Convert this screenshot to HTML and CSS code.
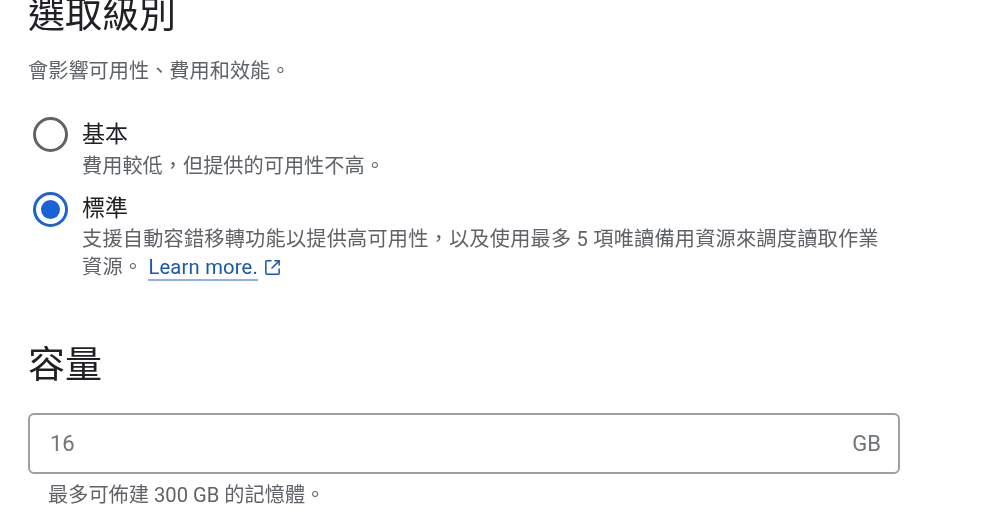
FILE: index.html
```html
<!DOCTYPE html>
<html lang="zh-Hant">
<head>
<meta charset="UTF-8">
<title>選取級別</title>
<link rel="stylesheet" href="styles.css">
</head>
<body>
  <main class="page">
    <h2 class="title">選取級別</h2>
    <p class="subtitle">會影響可用性、費用和效能。</p>

    <div class="option">
      <span class="radio"></span>
      <div class="option-text">
        <div class="option-label">基本</div>
        <div class="option-desc">費用較低&#65292;但提供的可用性不高。</div>
      </div>
    </div>

    <div class="option">
      <span class="radio checked"></span>
      <div class="option-text">
        <div class="option-label">標準</div>
        <div class="option-desc long">支援自動容錯移轉功能以提供高可用性&#65292;以及使用最多 5 項唯讀備用資源來調度讀取作業<br>資源。 <a class="link" href="#">Learn more.</a>
          <svg class="ext-icon" viewBox="0 0 20 20" fill="none" stroke="currentColor" stroke-width="1.6"><path d="M9 3H4a1 1 0 0 0-1 1v12a1 1 0 0 0 1 1h12a1 1 0 0 0 1-1v-5"/><path d="M12 3h5v5"/><path d="M17 3L9 11"/></svg>
        </div>
      </div>
    </div>

    <h2 class="title capacity-title">容量</h2>

    <div class="field">
      <span class="field-value">16</span>
      <span class="field-unit">GB</span>
    </div>
    <p class="hint">最多可佈建 300 GB 的記憶體。</p>
  </main>
</body>
</html>
```

FILE: styles.css
```css
*{box-sizing:border-box;margin:0;padding:0;}
body{
  background:#fff;color:#3c4043;overflow:hidden;
  font-family:Roboto,"Noto Sans CJK TC",sans-serif;
}
.page{width:872px;margin-left:28px;filter:blur(.6px);}
.title{
  font-size:37px;line-height:46px;font-weight:400;color:#202124;
}
.page > .title:first-child{margin-top:-7px;}
.subtitle{font-size:20.2px;line-height:28px;margin-top:18px;color:#5f6368;}
.option{display:flex;gap:14px;margin-left:5px;}
.subtitle + .option{margin-top:30px;}
.option + .option{margin-top:9px;}
.radio{
  flex:none;width:35px;height:35px;margin-top:2px;border-radius:50%;
  border:3px solid #5f6368;background:#fff;
}
.radio.checked{
  margin-top:3px;border-color:#1a62d6;position:relative;
}
.radio.checked::after{
  content:"";position:absolute;left:5px;top:5px;width:19px;height:19px;
  border-radius:50%;background:#1a62d6;
}
.option-text{flex:1;padding-top:3px;}
.option-label{font-size:23px;line-height:34px;color:#202124;}
.option-desc{font-size:20.2px;line-height:28px;color:#5f6368;}
.option-desc.long{margin-top:-1px;letter-spacing:.2px;}
.link{
  color:#1a56b0;text-decoration:none;
  border-bottom:2px solid #8fb2e6;
}
.ext-icon{width:19px;height:19px;color:#1a56b0;vertical-align:-3px;}
.capacity-title{margin-top:62px;}
.field{
  display:flex;justify-content:space-between;align-items:center;
  height:61px;margin-top:24px;padding:0 17px 0 20px;
  border:2px solid #9aa0a6;border-radius:6px;
  font-size:22px;color:#70757a;
}
.hint{font-size:20.2px;line-height:26px;margin-top:8px;padding-left:20px;color:#5f6368;}
```
